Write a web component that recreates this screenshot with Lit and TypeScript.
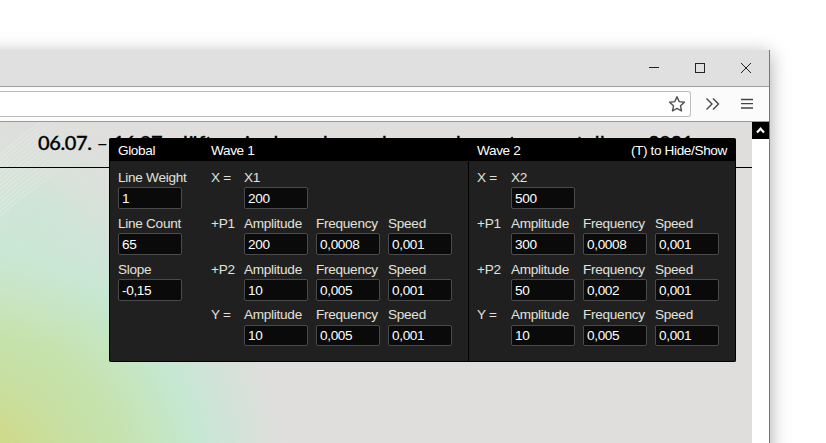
import { LitElement, html, css, svg } from "lit";
import { customElement, property } from "lit/decorators.js";

interface Field { label: string; value: string; }
interface Row { name: string; fields: Field[]; }

const afs = (a: string, f: string, s: string): Field[] => [
  { label: "Amplitude", value: a },
  { label: "Frequency", value: f },
  { label: "Speed", value: s },
];

const wave1: Row[] = [
  { name: "X =", fields: [{ label: "X1", value: "200" }] },
  { name: "+P1", fields: afs("200", "0,0008", "0,001") },
  { name: "+P2", fields: afs("10", "0,005", "0,001") },
  { name: "Y =", fields: afs("10", "0,005", "0,001") },
];
const wave2: Row[] = [
  { name: "X =", fields: [{ label: "X2", value: "500" }] },
  { name: "+P1", fields: afs("300", "0,0008", "0,001") },
  { name: "+P2", fields: afs("50", "0,002", "0,001") },
  { name: "Y =", fields: afs("10", "0,005", "0,001") },
];
const globals: Field[] = [
  { label: "Line Weight", value: "1" },
  { label: "Line Count", value: "65" },
  { label: "Slope", value: "-0,15" },
];

@customElement("number-field")
export class NumberField extends LitElement {
  @property() label = "";
  @property() value = "";
  static styles = css`
    :host { display: block; width: 64px; height: 46px; white-space: nowrap; }
    .label { display: block; height: 18px; line-height: var(--label-line, 18px); color: #e2e2dc; }
    .box {
      display: block; box-sizing: border-box; width: 64px; height: var(--box-height, 22px); margin: 0; padding: 0 0 0 3px;
      border: 1px solid #4b4b4b; border-radius: 2px; background: #0a0a0a; color: #fff;
      font: inherit; letter-spacing: -.35px; line-height: 20px; outline: none;
    }
  `;
  render() {
    return html`<label><span class="label">${this.label}</span><input class="box" .value=${this.value}></label>`;
  }
}

@customElement("wave-controls")
export class WaveControls extends LitElement {
  @property({ attribute: false }) rows: Row[] = [];
  static styles = css`
    :host { display: block; }
    .row { display: flex; gap: 8px; height: 46px; }
    .row:last-child { --label-line: 16px; --box-height: 21px; }
    .name { width: var(--name-width, 25px); line-height: var(--label-line, 18px); color: #e2e2dc; white-space: nowrap; }
  `;
  render() {
    return this.rows.map((r) => html`<div class="row"><span class="name">${r.name}</span>
      ${r.fields.map((f) => html`<number-field .label=${f.label} .value=${f.value}></number-field>`)}</div>`);
  }
}

@customElement("app-root")
export class AppRoot extends LitElement {
  static styles = css`
    :host { display: flow-root; position: relative; width: 826px; height: 443px; overflow: hidden; background: #fff; }
    .window {
      box-sizing: border-box; width: 830px; height: 460px; margin: 50px 0 0 -60px; padding-left: 60px;
      border-right: 1px solid #777; background: #e0e0e0; box-shadow: 0 4px 18px rgba(0, 0, 0, .34);
      display: flex; flex-direction: column;
    }
    svg { display: block; }
    .titlebar { box-sizing: border-box; height: 37px; background: #e0e0e0; border-bottom: 1px solid #a0a0a0; display: flex; justify-content: flex-end; }
    .control { width: 46px; height: 36px; }
    .toolbar { box-sizing: border-box; height: 35px; background: #fbfbfb; border-bottom: 1px solid #999; display: flex; padding-top: 4px; }
    .address { box-sizing: border-box; width: 691px; height: 26px; border: 1px solid #bcbcbc; border-left: 0; border-radius: 0 3px 3px 0; background: #fff; display: flex; justify-content: flex-end; }
    .body { flex: 1; display: flex; }
    .page { width: 752px; position: relative; background: #dfdedc; }
    .art { position: absolute; left: 0; top: 0; }
    .heading {
      position: relative; box-sizing: border-box; height: 46px; border-bottom: 1px solid #000; padding-left: 38px;
      font: 500 20px/41px Lato, sans-serif; letter-spacing: -.35px; -webkit-text-stroke: .3px #000; color: #000; white-space: nowrap;
      display: grid; grid-template-columns: 75px 52px 18px 62px 22px 56px 59px 74px 80px 112px auto;
    }
    .dash { font-weight: 400; -webkit-text-stroke: 0; }
    .wide { letter-spacing: .4px; }
    .scroll { width: 17px; background: #fff; }
    .panel {
      position: absolute; left: 109px; top: 16px; box-sizing: border-box; width: 627px; height: 224px;
      border: 1px solid #000; border-top: 0; border-radius: 2px; background: #202020; color: #fff;
      font: 13.6px "Liberation Sans", Arial, sans-serif; letter-spacing: -.28px; overflow: hidden;
      display: grid; grid-template-columns: 93px 265px 1fr; grid-template-rows: 23px 1fr;
    }
    .head { background: #000; line-height: 25px; padding: 0 8px; display: flex; justify-content: space-between; letter-spacing: -.37px; }
    .cell { padding: 8px 0 0 8px; }
    .second { border-left: 1px solid #000; --name-width: 26px; }
  `;

  private art() {
    const lines = Array.from({ length: 15 }, (_, i) => {
      const o = i * 4.4;
      return svg`<path d=${`M-2 ${96 - o} Q34 ${62 - o} 110 ${18 - o}`} />`;
    });
    return html`<svg class="art" width="752" height="321" viewBox="0 0 752 321">
      <defs>
        <radialGradient id="g" gradientUnits="userSpaceOnUse" cx="-45" cy="368" r="350">
          <stop offset="0" stop-color="#d4d478" />
          <stop offset=".18" stop-color="#d0d988" />
          <stop offset=".34" stop-color="#c8dfa0" />
          <stop offset=".5" stop-color="#c5e3b0" />
          <stop offset=".61" stop-color="#c5e6c2" />
          <stop offset=".7" stop-color="#c5e8d2" />
          <stop offset=".8" stop-color="#d0e3d8" />
          <stop offset=".95" stop-color="#dfdedc" />
        </radialGradient>
        <radialGradient id="glow" gradientUnits="userSpaceOnUse" cx="35" cy="100" r="120">
          <stop offset="0" stop-color="#cae7d4" stop-opacity=".7" />
          <stop offset="1" stop-color="#d6e3da" stop-opacity="0" />
        </radialGradient>
        <linearGradient id="fade" gradientUnits="userSpaceOnUse" x1="0" y1="0" x2="100" y2="0">
          <stop offset="0" stop-color="#fff" stop-opacity=".25" />
          <stop offset="1" stop-color="#fff" stop-opacity="0" />
        </linearGradient>
      </defs>
      <rect width="752" height="321" fill="#dfdedc" />
      <rect width="752" height="321" fill="url(#g)" />
      <rect width="752" height="321" fill="url(#glow)" />
      <g fill="none" stroke="url(#fade)" stroke-width="1.3">${lines}</g>
    </svg>`;
  }

  render() {
    return html`
      <div class="window">
        <div class="titlebar">
          <svg class="control" viewBox="0 0 46 36"><path d="M18 17.5h10" stroke="#222" /></svg>
          <svg class="control" viewBox="0 0 46 36"><rect x="18.5" y="13.5" width="9" height="9" fill="none" stroke="#222" /></svg>
          <svg class="control" viewBox="0 0 46 36"><path d="M18 13l10 10M28 13l-10 10" stroke="#222" /></svg>
        </div>
        <div class="toolbar">
          <div class="address">
            <svg width="27" height="24" viewBox="0 0 27 24"><path d="M14 4.8l2.2 4.8 5.2.6-3.9 3.6 1 5.2-4.5-2.6-4.5 2.6 1-5.2-3.9-3.6 5.2-.6z" fill="none" stroke="#505050" stroke-width="1.4" stroke-linejoin="round" /></svg>
          </div>
          <svg width="78" height="26" viewBox="0 0 78 26" fill="none" stroke="#444">
            <path d="M15.5 7.5l5.5 5.5-5.5 5.5M22 7.5l5.5 5.5-5.5 5.5" stroke-width="1.4" />
            <path d="M50 8.5h12M50 12.7h12M50 17h12" stroke-width="1.3" />
          </svg>
        </div>
        <div class="body">
          <div class="page">
            ${this.art()}
            <div class="heading">
              <span>06.07. <span class="dash">–</span></span><span>16.07.</span><span>–</span><span>lüften</span><span>in</span><span>den</span><span>hans</span><span>hanser</span><span>kommt</span><span class="wide">ausstellung</span><span>2021</span>
            </div>
            <div class="panel">
              <div class="head">Global</div>
              <div class="head">Wave 1</div>
              <div class="head second"><span>Wave 2</span><span>(T) to Hide/Show</span></div>
              <div class="cell">${globals.map((f) => html`<number-field .label=${f.label} .value=${f.value}></number-field>`)}</div>
              <div class="cell"><wave-controls .rows=${wave1}></wave-controls></div>
              <div class="cell second"><wave-controls .rows=${wave2}></wave-controls></div>
            </div>
          </div>
          <div class="scroll">
            <svg width="17" height="17" viewBox="0 0 17 17"><rect width="17" height="17" fill="#000" /><path d="M5 10.5l3.5-3.8 3.5 3.8" fill="none" stroke="#fff" stroke-width="2.2" /></svg>
          </div>
        </div>
      </div>`;
  }
}
